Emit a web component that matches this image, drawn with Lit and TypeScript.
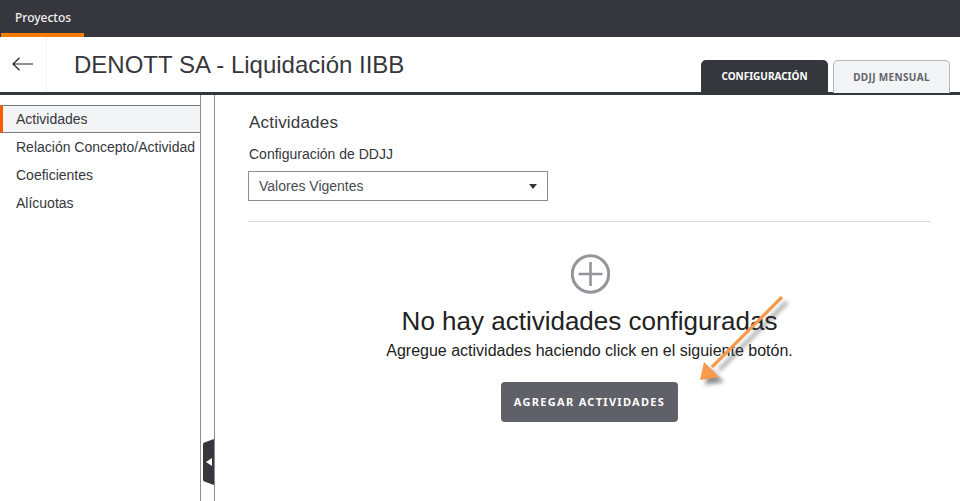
import { LitElement, html, css } from "lit";
import { customElement } from "lit/decorators.js";

@customElement("app-root")
export class AppRoot extends LitElement {
  static styles = css`
    :host { display: flex; flex-direction: column; width: 960px; height: 501px; overflow: hidden; background: #fff; font-family: "Liberation Sans", Arial, sans-serif; color: #333; position: relative; }
    .top { height: 37px; background: #36373c; display: flex; padding-left: 1px; box-sizing: border-box; flex: none; }
    .top a { width: 83px; box-sizing: border-box; height: 37px; border-bottom: 4px solid #f57c00; color: #f2f2f2; font: 500 12px/36px "Noto Sans", sans-serif; padding-left: 14px; }
    .head { height: 58px; flex: none; box-sizing: border-box; border-bottom: 3px solid #36373c; display: flex; align-items: stretch; }
    .back { width: 47px; box-sizing: border-box; border-right: 1px solid #f0f0f0; display: flex; align-items: center; padding-left: 12px; padding-bottom: 1px; }
    .back svg { display: block; }
    h1 { margin: 0; padding: 14px 0 0 27px; font: 400 24px/28px "Liberation Sans", Arial, sans-serif; color: #36373c; flex: 1; }
    .tabs { display: flex; align-items: flex-end; gap: 5px; padding-right: 10px; margin-bottom: -1px; }
    .tab { height: 33px; box-sizing: border-box; border-radius: 5px 5px 0 0; font: 700 10px/33px "Noto Sans", sans-serif; text-align: center; }
    .tab.on { width: 127px; background: #36373c; color: #fff; }
    .tab.off { width: 117px; background: #f3f4f6; color: #62636b; border: 1px solid #b5b6bb; border-bottom: 0; line-height: 32px; letter-spacing: 0.35px; }
    .body { flex: 1; display: flex; min-height: 0; }
    .side { width: 201px; box-sizing: border-box; border-right: 1px solid #8d8e94; padding-top: 10px; flex: none; }
    .item { height: 28px; font-size: 14px; line-height: 28px; padding-left: 16px; color: #36373c; white-space: nowrap; }
    .item.on { height: 28px; background: #f3f4f6; border-top: 1px solid #77787e; border-bottom: 1px solid #77787e; border-left: 3px solid #fb5a00; padding-left: 13px; box-sizing: border-box; line-height: 26px; }
    .gutter { width: 13px; flex: none; position: relative; }
    .handle { position: absolute; left: 2px; top: 344px; width: 11px; height: 46px; background: #36373c; border-radius: 6px 0 0 6px; clip-path: polygon(0 4px, 100% 0, 100% 100%, 0 calc(100% - 4px)); display: flex; align-items: center; justify-content: center; }
    .handle i { display: block; width: 0; height: 0; border: 4px solid transparent; border-left: 0; border-right: 6px solid #fff; }
    main { flex: 1; box-sizing: border-box; border-left: 1px solid #8d8e94; padding: 17px 30px 0 34px; min-width: 0; }
    h2 { margin: 0; font: 400 17px/22px "Liberation Sans", Arial, sans-serif; color: #36373c; letter-spacing: 0.2px; }
    label { display: block; margin-top: 11px; font-size: 14px; line-height: 18px; color: #36373c; }
    .select { margin-top: 8px; margin-left: -1px; width: 300px; height: 30px; box-sizing: border-box; border: 1px solid #8d8e94; display: flex; align-items: center; justify-content: space-between; padding: 0 10px; font-size: 14px; color: #4a4b52; }
    .select i { display: block; width: 0; height: 0; border: 4.5px solid transparent; border-top: 5px solid #36373c; border-bottom: 0; }
    hr { margin: 20px 0 0; border: 0; border-top: 1px solid #d9d9db; }
    .empty { display: flex; flex-direction: column; align-items: center; padding-top: 32px; }
    .empty svg { display: block; }
    .empty h3 { margin: 11px 0 0; font: 400 26px/32px "Liberation Sans", Arial, sans-serif; color: #222; white-space: nowrap; }
    .empty p { margin: 4px 0 0; font-size: 16px; line-height: 19px; color: #222; white-space: nowrap; }
    button { margin-top: 22px; width: 177px; height: 40px; border: 0; border-radius: 4px; background: #5f6068; color: #fff; font: 700 11px/40px "Noto Sans", sans-serif; letter-spacing: 1.3px; padding: 0; }
    .arrow { position: absolute; left: 690px; top: 285px; pointer-events: none; overflow: visible; }
  `;

  render() {
    return html`
      <div class="top"><a>Proyectos</a></div>
      <div class="head">
        <div class="back">
          <svg width="21" height="14" viewBox="0 0 21 14" fill="none" stroke="#222" stroke-width="1.2"><path d="M21 7H1M7.5 .7 1 7l6.5 6.3"/></svg>
        </div>
        <h1>DENOTT SA - Liquidación IIBB</h1>
        <div class="tabs">
          <div class="tab on">CONFIGURACIÓN</div>
          <div class="tab off">DDJJ MENSUAL</div>
        </div>
      </div>
      <div class="body">
        <nav class="side">
          <div class="item on">Actividades</div>
          <div class="item">Relación Concepto/Actividad</div>
          <div class="item">Coeficientes</div>
          <div class="item">Alícuotas</div>
        </nav>
        <div class="gutter"><div class="handle"><i></i></div></div>
        <main>
          <h2>Actividades</h2>
          <label>Configuración de DDJJ</label>
          <div class="select"><span>Valores Vigentes</span><i></i></div>
          <hr />
          <div class="empty">
            <svg width="40" height="40" viewBox="0 0 40 40" fill="none" stroke="#94959c" stroke-width="3"><circle cx="20.5" cy="20" r="18.2"/><path d="M20.5 8v24M8.5 20h24" stroke-width="2.6"/></svg>
            <h3>No hay actividades configuradas</h3>
            <p>Agregue actividades haciendo click en el siguiente botón.</p>
            <button>AGREGAR ACTIVIDADES</button>
          </div>
        </main>
      </div>
      <svg class="arrow" width="110" height="110" viewBox="0 0 110 110">
        <defs><filter id="s" x="-30%" y="-30%" width="160%" height="160%"><feGaussianBlur stdDeviation="2"/></filter></defs>
        <g filter="url(#s)" opacity=".6" transform="translate(5 5)"><path d="M92 12 24 80" stroke="#444" stroke-width="3"/><path d="M10 95l4-18 15 15z" fill="#444"/></g>
        <path d="M92 12 22 82" stroke="#f79a4d" stroke-width="3.2"/>
        <path d="M10 95l4-18 15 15z" fill="#f79a4d"/>
      </svg>
    `;
  }
}
